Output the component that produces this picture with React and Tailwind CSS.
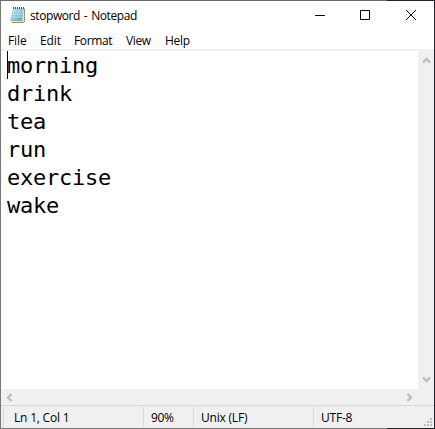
import React from "react";

const menus = [
  ["File", "w-[32px] tracking-[-0.1px]"],
  ["Edit", "w-[34px] tracking-[-0.1px]"],
  ["Format", "w-[52px] tracking-[-0.35px]"],
  ["View", "w-[39px] tracking-[-0.35px]"],
  ["Help", "w-[40px] tracking-[-0.3px]"],
];
const lines = ["morning", "drink", "tea", "run", "exercise", "wake"];

function NotepadIcon() {
  return (
    <svg className="ml-2 mt-[5px] h-[18px] w-[18px] shrink-0" viewBox="0 0 18 18">
      <defs>
        <linearGradient id="paper" x1="0" y1="0" x2="1" y2="1">
          <stop offset="0" stopColor="#b9e1ea" />
          <stop offset="0.5" stopColor="#8fcbdc" />
          <stop offset="1" stopColor="#4fa3bd" />
        </linearGradient>
      </defs>
      <path d="M4 2H16V16L14.5 17H3L1 15Z" fill="#e9e4d6" />
      <path d="M15.5 2.5V15.5L14 16.5H3" fill="none" stroke="#a79263" />
      <path d="M4 2.5H14.6L13 15H1Z" fill="url(#paper)" />
      <path d="M3.5 6H14M3.2 8.5H13.7M2.8 11H13.4" stroke="#d0edf3" strokeWidth="0.5" />
      <path d="M4 2H15" stroke="#455a60" strokeWidth="2" strokeDasharray="1 1" />
    </svg>
  );
}

function Chevron({ d, className }) {
  return (
    <svg className={className} viewBox="0 0 9 9" width="9" height="9">
      <path d={d} fill="none" stroke="#bcbcbc" strokeWidth="2.3" />
    </svg>
  );
}

function Grip() {
  return (
    <svg className="mt-[12px] ml-auto mr-[2px] h-[8px] w-[8px]" viewBox="0 0 8 8" fill="#bfbfbf" shapeRendering="crispEdges">
      <path d="M6 0h2v2H6zM3 3h2v2H3zM6 3h2v2H6zM0 6h2v2H0zM3 6h2v2H3zM6 6h2v2H6z" />
    </svg>
  );
}

export default function App() {
  return (
    <div className="flex h-[429px] w-[435px] flex-col overflow-hidden bg-white font-['Open_Sans','Noto_Sans',sans-serif] text-[12px] text-black">
      <div className="flex h-px shrink-0 bg-[#6b6b6b]">
        <div className="ml-auto w-[48px] bg-[#232328]" />
      </div>
      <div className="flex h-[427px] flex-col border-l border-r border-l-[#777777] border-r-[#232328]">
        <header className="flex h-[30px] shrink-0">
          <NotepadIcon />
          <span className="ml-[3px] mt-[6px] leading-[18px] tracking-[-0.42px] [word-spacing:1.2px] whitespace-nowrap">stopword - Notepad</span>
          <svg className="ml-auto h-[30px] w-[138px]" viewBox="296 1 138 30" fill="none" stroke="#000" strokeWidth="1">
            <path d="M315 15.5H325" />
            <path d="M360.5 10.5H369.5V19.5H360.5Z" />
            <path d="M406 10L416 20M416 10L406 20" />
          </svg>
        </header>
        <nav className="flex h-[18px] shrink-0 pl-[7px] leading-[20px]">
          {menus.map(([name, cls]) => (
            <span key={name} className={cls}>{name}</span>
          ))}
        </nav>
        <div className="h-[2px] shrink-0 bg-[#f0f0f0]" />
        <main className="flex h-[338px] shrink-0">
          <div className="relative flex-1 pl-[6px] pt-px font-['DejaVu_Sans_Mono',monospace] text-[22px] leading-[28px] tracking-[-0.245px]">
            <div className="absolute left-[6px] top-0 h-[28px] w-px bg-black" />
            {lines.map((l) => (
              <div key={l} className="h-[28px]">{l}</div>
            ))}
          </div>
          <div className="flex w-[16px] flex-col items-center justify-between bg-[#f0f0f0] py-[5px]">
            <Chevron d="M1 6.5L4.5 3L8 6.5" />
            <Chevron d="M1 2.5L4.5 6L8 2.5" />
          </div>
        </main>
        <div className="flex h-[16px] shrink-0 items-center justify-between bg-[#f0f0f0] pl-1 pr-5">
          <Chevron d="M6.5 1L3 4.5L6.5 8" />
          <Chevron d="M2.5 1L6 4.5L2.5 8" />
        </div>
        <footer className="flex h-[23px] shrink-0 border-t border-[#d7d7d7] bg-[#f0f0f0] pl-[2px] leading-[22px] whitespace-nowrap">
          <div className="my-px h-[20px] w-[140px] border-l border-[#d7d7d7] pl-[10px] tracking-[-0.2px]">Ln 1, Col 1</div>
          <div className="my-px h-[20px] w-[50px] border-l border-[#d7d7d7] pl-[7px] tracking-[-0.3px]">90%</div>
          <div className="my-px h-[20px] w-[120px] border-l border-[#d7d7d7] pl-[7px] tracking-[-0.2px]">Unix (LF)</div>
          <div className="my-px h-[20px] border-l border-[#d7d7d7] pl-[7px] tracking-[-0.2px]">UTF-8</div>
          <Grip />
        </footer>
      </div>
      <div className="flex h-px shrink-0 bg-[#777777]">
        <div className="ml-auto w-[48px] bg-[#232328]" />
      </div>
    </div>
  );
}
